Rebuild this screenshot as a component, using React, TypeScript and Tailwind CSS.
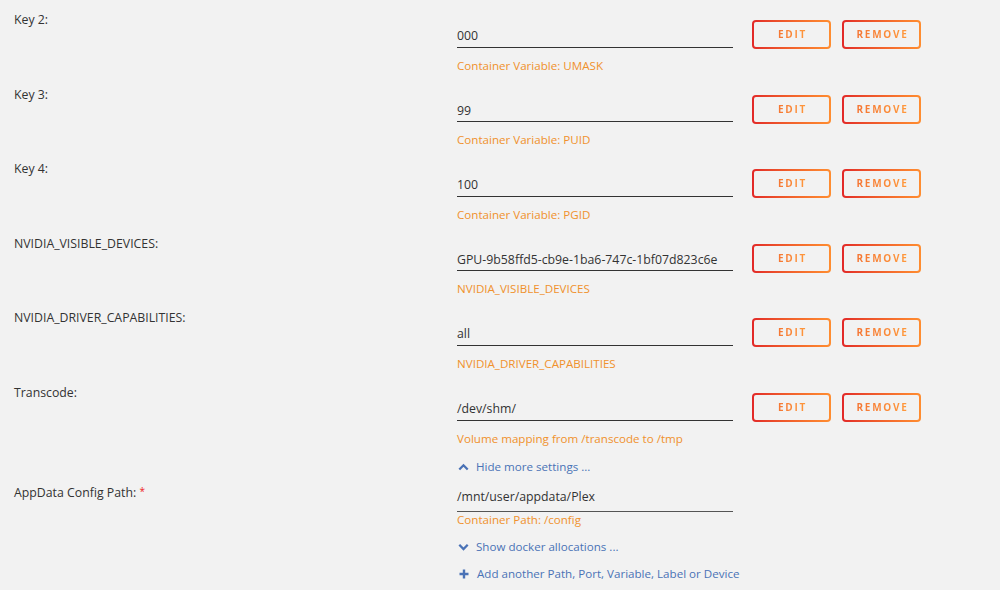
import React from "react";

const font = { fontFamily: '"Open Sans", "Noto Sans", sans-serif' };

function PlusIcon() {
  return (
    <svg width="10" height="10" viewBox="0 0 10 10" className="shrink-0">
      <path d="M5 0.5v9M0.5 5h9" stroke="currentColor" strokeWidth="2.4" />
    </svg>
  );
}

function Chevron({ up }: { up?: boolean }) {
  return (
    <svg width="11" height="8" viewBox="0 0 11 8" className="shrink-0">
      <path
        d={up ? "M1.3 6.5L5.5 2.3L9.7 6.5" : "M1.3 1.8L5.5 6L9.7 1.8"}
        stroke="currentColor"
        strokeWidth="2.3"
        fill="none"
      />
    </svg>
  );
}

function GradBtn({ label }: { label: string }) {
  return (
    <div className="rounded-[4px] bg-gradient-to-r from-[#e22828] to-[#ff8d30] p-[2px] w-[79px] h-[29px]">
      <div className="w-full h-full rounded-[2px] bg-[#f2f2f2] flex items-center justify-center">
        <span className="text-[10px] font-bold tracking-[1.7px] bg-gradient-to-r from-[#f47433] to-[#ff993c] bg-clip-text text-transparent pl-[2px]">
          {label}
        </span>
      </div>
    </div>
  );
}

type Row = { label: string; value: string; desc: string };

const rows: Row[] = [
  { label: "Key 2:", value: "000", desc: "Container Variable: UMASK" },
  { label: "Key 3:", value: "99", desc: "Container Variable: PUID" },
  { label: "Key 4:", value: "100", desc: "Container Variable: PGID" },
  {
    label: "NVIDIA_VISIBLE_DEVICES:",
    value: "GPU-9b58ffd5-cb9e-1ba6-747c-1bf07d823c6e",
    desc: "NVIDIA_VISIBLE_DEVICES",
  },
  { label: "NVIDIA_DRIVER_CAPABILITIES:", value: "all", desc: "NVIDIA_DRIVER_CAPABILITIES" },
  { label: "Transcode:", value: "/dev/shm/", desc: "Volume mapping from /transcode to /tmp" },
];

function FieldRow({ r }: { r: Row }) {
  return (
    <div className="flex h-[74.6px]">
      <div className="w-[457px] pl-[14px] pt-[10px] text-[12.3px] leading-[20px] text-[#333]">{r.label}</div>
      <div className="w-[276px] flex flex-col">
        <div className="mt-[26px] h-[24px] border-b border-[#333] text-[12.3px] leading-[20px] text-[#333]">
          {r.value}
        </div>
        <div className="mt-[9px] text-[11.6px] leading-[18px] text-[#f0912c]">{r.desc}</div>
      </div>
      <div className="flex gap-[11px] ml-[19px] mt-[20px] h-[29px]">
        <GradBtn label="EDIT" />
        <GradBtn label="REMOVE" />
      </div>
    </div>
  );
}

export default function App() {
  return (
    <div className="w-[1000px] h-[590px] bg-[#f2f2f2] overflow-hidden" style={font}>
      {rows.map((r) => (
        <FieldRow key={r.label} r={r} />
      ))}
      <div className="flex h-[30px] pt-[9px]">
        <div className="w-[458px]" />
        <div className="flex items-center gap-[7px] text-[11.6px] leading-[20px] text-[#4a72b6]">
          <Chevron up />
          <span>Hide more settings ...</span>
        </div>
      </div>
      <div className="flex">
        <div className="w-[457px] pl-[14px] pt-[5px] text-[12.3px] leading-[20px] text-[#333]">
          AppData Config Path: <span className="text-[#e22] align-top text-[10px] relative top-[-2px]">*</span>
        </div>
        <div className="w-[276px] flex flex-col">
          <div className="mt-[9px] h-[25px] border-b border-[#555] text-[12.3px] leading-[20px] text-[#333]">
            /mnt/user/appdata/Plex
          </div>
          <div className="text-[11.6px] leading-[16px] text-[#f0912c]">Container Path: /config</div>
          <div className="mt-[9px] flex items-center gap-[7px] pl-[1px] text-[11.6px] leading-[20px] text-[#4a72b6] whitespace-nowrap">
            <Chevron />
            <span>Show docker allocations ...</span>
          </div>
          <div className="mt-[7px] flex items-center gap-[8px] pl-[2px] text-[11.6px] leading-[20px] text-[#4a72b6] whitespace-nowrap">
            <PlusIcon />
            <span>Add another Path, Port, Variable, Label or Device</span>
          </div>
        </div>
      </div>
    </div>
  );
}
